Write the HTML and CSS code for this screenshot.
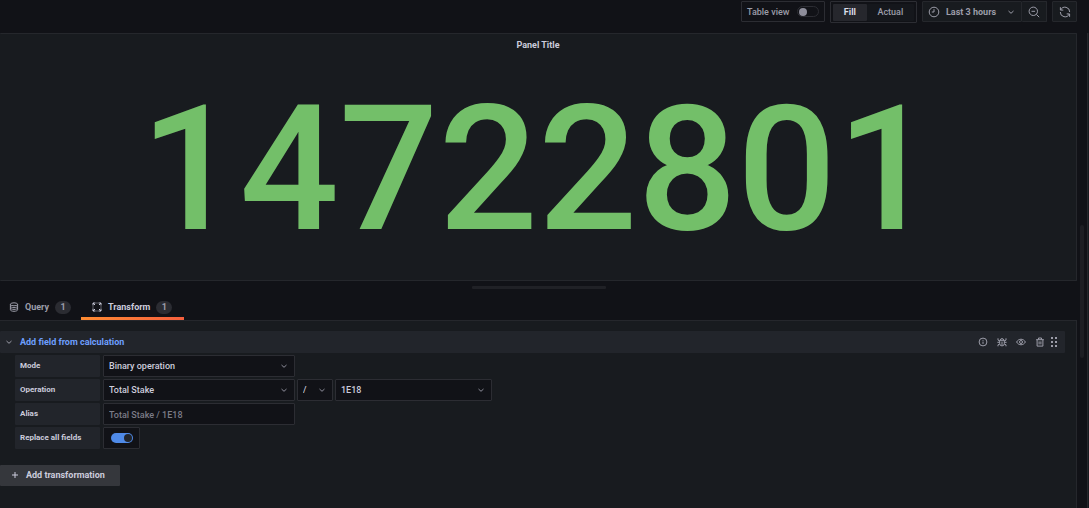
FILE: index.html
```
<!DOCTYPE html>
<html lang="en">
<head>
<meta charset="utf-8">
<title>Edit panel</title>
<link rel="stylesheet" href="styles.css">
</head>
<body>
<div class="editor">
  <main class="main">
    <div class="toolbar">
      <label class="box table-view">Table view <input type="checkbox" class="switch"></label>
      <div class="box segment" role="group" aria-label="Panel size">
        <button type="button" class="seg active">Fill</button>
        <button type="button" class="seg">Actual</button>
      </div>
      <div class="time-group">
        <button type="button" class="tool time">
          <svg class="icon-md" viewBox="0 0 12 12"><circle cx="6" cy="6" r="4.8"/><path d="M6 3.2V6H3.8"/></svg>
          <span>Last 3 hours</span>
          <svg class="chev" viewBox="0 0 8 8"><path d="M1.5 3 4 5.3 6.5 3"/></svg>
        </button>
        <button type="button" class="tool zoom" aria-label="Zoom out">
          <svg class="icon-md" viewBox="0 0 12 12"><circle cx="5.3" cy="5.3" r="4.2"/><path d="M3.5 5.3h3.6M8.4 8.4l2.8 2.8"/></svg>
        </button>
      </div>
      <button type="button" class="tool refresh" aria-label="Refresh">
        <svg class="icon-md" viewBox="0 0 12 12"><path d="M1.4 1.2v2.9h2.9M1.7 4A4.7 4.7 0 0 1 10.7 6M10.6 10.8V7.9H7.7M10.3 8A4.7 4.7 0 0 1 1.3 6"/></svg>
      </button>
    </div>

    <section class="panel">
      <h2 class="panel-title">Panel Title</h2>
      <div class="value">14722801</div>
    </section>

    <div class="splitter"><span class="handle"></span></div>

    <nav class="tabs">
      <a class="tab" href="#query">
        <svg class="icon-sm" viewBox="0 0 10 10"><ellipse cx="5" cy="2.3" rx="3.6" ry="1.5"/><path d="M1.4 2.3v5.5c0 .8 1.6 1.5 3.6 1.5s3.6-.7 3.6-1.5V2.3M1.4 4.2c0 .8 1.6 1.4 3.6 1.4s3.6-.6 3.6-1.4M1.4 6c0 .8 1.6 1.4 3.6 1.4S8.6 6.8 8.6 6"/></svg>
        <span>Query</span><span class="count">1</span>
      </a>
      <a class="tab current" href="#transform">
        <svg class="icon-sm" viewBox="0 0 10 10"><path d="M1 3.5V1h2.5M6.5 1H9v2.5M9 6.5V9H6.5M3.5 9H1V6.5M1 1l2 2M9 1 7 3M9 9 7 7M1 9l2-2M4.6 1h.8M4.6 9h.8M1 4.6v.8M9 4.6v.8"/></svg>
        <span>Transform</span><span class="count">1</span>
      </a>
    </nav>

    <section class="content">
      <header class="row-head">
        <svg class="chev" viewBox="0 0 8 8"><path d="M1.5 3 4 5.3 6.5 3"/></svg>
        <h3 class="row-title">Add field from calculation</h3>
        <div class="actions">
          <button type="button" class="act" aria-label="Info"><svg class="icon-sm" viewBox="0 0 10 10"><circle cx="5" cy="5" r="3.9"/><path d="M5 4.6v2.3M5 2.9v.9"/></svg></button>
          <button type="button" class="act" aria-label="Debug"><svg class="icon-sm" viewBox="0 0 10 10"><path d="M2.7 3.3h4.6v3.3a2.3 2.3 0 0 1-4.6 0zM3.3 3.3a1.7 1.7 0 0 1 3.4 0M2.7 5.3H.4M7.3 5.3h2.3M2.7 4 1 3.1V1.3M7.3 4 9 3.1V1.3M2.7 7 1 7.8v1.500M7.300 7l1.700.8v1.500M5 4.500v3.500"/></svg></button>
          <button type="button" class="act" aria-label="Disable"><svg class="icon-sm" viewBox="0 0 10 10"><path d="M.6 5C2.6 1.3 7.4 1.3 9.4 5 7.4 8.7 2.6 8.7.6 5z"/><circle cx="5" cy="5" r="1.5"/></svg></button>
          <button type="button" class="act" aria-label="Remove"><svg class="icon-sm" viewBox="0 0 10 10"><path d="M1.2 2.7h7.6M3.5 2.5V1h3v1.5M2.1 2.7v6.400h5.800V2.700M4.100 4.400v3M5.900 4.400v3"/></svg></button>
          <button type="button" class="act drag" aria-label="Move"><svg class="icon-sm dots" viewBox="0 0 10 10"><path d="M2 0h2v2H2zM6 0h2v2H6zM2 4h2v2H2zM6 4h2v2H6zM2 8h2v2H2zM6 8h2v2H6z"/></svg></button>
        </div>
      </header>

      <form class="form">
        <div class="field">
          <label class="label" for="mode">Mode</label>
          <span class="select wide"><select id="mode"><option>Binary operation</option></select><svg class="chev" viewBox="0 0 8 8"><path d="M1.5 3 4 5.3 6.5 3"/></svg></span>
        </div>
        <div class="field">
          <label class="label" for="left">Operation</label>
          <span class="select wide"><select id="left"><option>Total Stake</option></select><svg class="chev" viewBox="0 0 8 8"><path d="M1.5 3 4 5.3 6.5 3"/></svg></span>
          <span class="select operator"><select aria-label="Operator"><option>/</option></select><svg class="chev" viewBox="0 0 8 8"><path d="M1.5 3 4 5.3 6.5 3"/></svg></span>
          <span class="select operand"><select aria-label="Right operand"><option>1E18</option></select><svg class="chev" viewBox="0 0 8 8"><path d="M1.5 3 4 5.3 6.5 3"/></svg></span>
        </div>
        <div class="field">
          <label class="label" for="alias">Alias</label>
          <input class="text wide" id="alias" type="text" placeholder="Total Stake / 1E18">
        </div>
        <div class="field">
          <label class="label" for="replace">Replace all fields</label>
          <span class="switch-box"><input type="checkbox" class="switch" id="replace" checked></span>
        </div>
      </form>

      <button type="button" class="add"><svg class="plus" viewBox="0 0 8 8"><path d="M4 1v6M1 4h6"/></svg>Add transformation</button>
    </section>
  </main>
  <div class="gutter"><span class="thumb"></span></div>
  <aside class="side"></aside>
</div>
</body>
</html>
```
FILE: styles.css
```
* { box-sizing: border-box; }

body {
  margin: 0;
  background: #111217;
  color: #ccccdc;
  font: 500 9px/14px Roboto, sans-serif;
}

button, input, select { font: inherit; color: inherit; margin: 0; }
button { border: 0; padding: 0; background: none; }
h2, h3 { margin: 0; font: inherit; }
a { color: inherit; text-decoration: none; }

svg {
  display: block;
  flex: none;
  fill: none;
  stroke: currentColor;
  stroke-width: 1;
}

.icon-md { width: 12px; height: 12px; }
.icon-sm { width: 10px; height: 10px; }
.icon-sm.dots { fill: currentColor; stroke: none; }
.chev { width: 8px; height: 8px; }
.plus { width: 8px; height: 8px; }

.editor { display: flex; min-height: 100vh; }
.main { flex: 1; min-width: 0; display: flex; flex-direction: column; }

/* Toolbar */
.toolbar {
  display: flex;
  justify-content: flex-end;
  align-items: flex-start;
  gap: 5px;
  height: 33px;
  padding-top: 1px;
  color: #9c9da9;
}
.box {
  display: flex;
  align-items: center;
  height: 22px;
  border: 1px solid #2c2d33;
  border-radius: 1px;
}
.table-view { justify-content: space-between; padding: 0 5px; width: 84px; height: 21px; }
.segment { padding: 0 2px; width: 87px; }
.seg { height: 17px; flex: 14; border-radius: 1px; background: #15171c; }
.seg:first-child { flex: 10; }
.seg.active { background: #26272d; color: #dcdce8; font-weight: 700; }
.time-group { display: flex; }
.tool {
  display: flex;
  align-items: center;
  justify-content: center;
  height: 21px;
  border: 1px solid #25272c;
  border-radius: 1px;
  background: #181b1f;
}
.time { width: 100px; gap: 6px; padding: 0 6px 0 5px; font-weight: 700; }
.time span { flex: 1; text-align: left; }
.zoom { width: 25px; border-left: 0; }
.refresh { width: 25px; }

/* Switches */
.switch {
  appearance: none;
  flex: none;
  display: flex;
  align-items: center;
  width: 22px;
  height: 11px;
  padding: 0 1px;
  border: 1px solid #2c2d33;
  border-radius: 6px;
}
.switch::before {
  content: "";
  width: 8px;
  height: 8px;
  border-radius: 50%;
  background: #8e8e9b;
}
.switch:checked { justify-content: flex-end; height: 10px; background: #4f8ae8; border: 0; }
.switch:checked::before { background: #22252b; }

/* Visualization */
.panel {
  display: flex;
  flex-direction: column;
  height: 248px;
  border: 1px solid #25272c;
  border-left: 0;
  border-radius: 1px;
  background: #181b1f;
}
.panel-title { padding-top: 4px; font-weight: 700; text-align: center; }
.value {
  flex: 1;
  padding-top: 15px;
  color: #73bf69;
  font-size: 175px;
  line-height: 206px;
  text-align: center;
}

.splitter { display: flex; justify-content: center; height: 14px; padding-top: 5px; }
.handle { width: 134px; height: 3px; border-radius: 1px; background: #202126; }

/* Tabs */
.tabs { display: flex; height: 25px; }
.tab {
  display: flex;
  align-items: center;
  gap: 6px;
  padding: 0 10px 1px 9px;
  color: #9c9da9;
  font-weight: 700;
}
.current {
  padding: 2px 12px 0 11px;
  color: #ccccdc;
  border-bottom: 3px solid;
  border-image: linear-gradient(90deg, #ff8c32, #f55f3e) 1;
}
.count {
  width: 16px;
  height: 13px;
  border-radius: 7px;
  background: #2b2c32;
  color: #9c9da9;
  line-height: 13px;
  text-align: center;
}

/* Transformation editor */
.content {
  flex: 1;
  padding: 10px 11px 18px 0;
  border: 1px solid #25272c;
  border-width: 1px 1px 0 0;
  background: #181b1f;
}
.row-head {
  display: flex;
  align-items: center;
  height: 22px;
  padding: 0 6px 0 5px;
  border-radius: 1px;
  background: #22252b;
  color: #9c9da9;
}
.row-title { margin-left: 7px; color: #6e9fff; font-weight: 700; }
.actions { display: flex; gap: 9px; margin-left: auto; }
.drag { margin-left: -5px; }

.form { display: flex; flex-direction: column; gap: 2px; padding: 2px 0 0 15px; }
.field { display: flex; gap: 2px; height: 22px; }
.label {
  width: 85px;
  margin-right: 1px;
  padding: 0 5px;
  border-radius: 1px;
  background: #22252b;
  font-size: 8px;
  font-weight: 700;
  line-height: 21px;
}
.select { position: relative; display: flex; }
.select select { appearance: none; width: 100%; }
.select .chev { position: absolute; right: 7px; top: 7px; color: #8e8e9b; pointer-events: none; }
.select select, .text, .switch-box {
  border: 1px solid #2c2d33;
  border-radius: 1px;
  background: #111217;
  padding: 0 5px;
}
.wide { width: 192px; }
.operator { width: 36px; }
.operand { width: 157px; }
.text { padding-top: 1px; }
.text::placeholder { color: #7b7c87; opacity: 1; }
.switch-box { display: flex; align-items: center; justify-content: center; width: 37px; }

.add {
  display: flex;
  align-items: center;
  gap: 7px;
  height: 21px;
  margin-top: 16px;
  padding: 0 15px 1px 11px;
  border-radius: 1px;
  background: #35373c;
  font-weight: 700;
}

/* Scroll gutter and options pane edge */
.gutter { width: 10px; padding: 225px 3px 0; }
.thumb { display: block; width: 4px; height: 133px; border-radius: 2px; background: #1d1e23; }
.side { width: 2px; margin-top: 33px; border-left: 1px solid #25272c; background: #181b1f; }
```
